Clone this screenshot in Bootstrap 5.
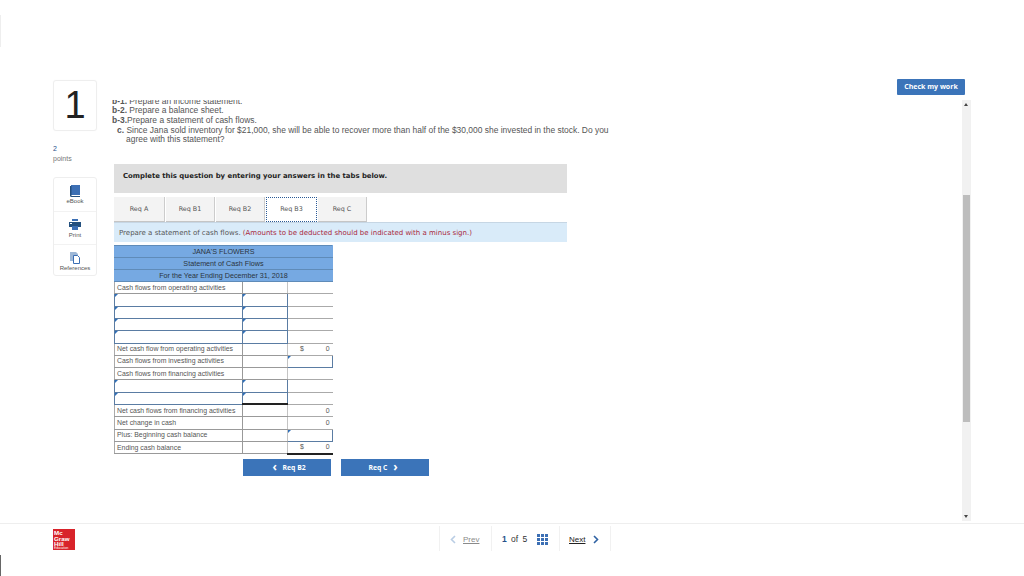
<!DOCTYPE html>
<html lang="en">
<head>
<meta charset="utf-8">
<title>Statement of Cash Flows</title>
<link href="https://cdn.jsdelivr.net/npm/bootstrap@5.3.0/dist/css/bootstrap.min.css" rel="stylesheet">
<style>
html,body{height:576px;overflow:hidden;background:#fff}
body{font-family:"Liberation Sans",Arial,sans-serif;color:#333;position:relative;font-size:8.2px}
.edge-a,.edge-b{position:absolute;left:0;width:1px}
.edge-a{top:15px;height:32px;background:#eee}
.edge-b{top:555px;height:21px;background:#666}
.stage{height:523px;padding:79px 53px 0 53px}
.rail{width:44px;flex:none;margin-right:15px;padding-top:1px}
.qnum{height:51px;border:1px solid #eee;border-radius:3px;font-size:38px;color:#222;line-height:49px;box-shadow:0 0 1px #eee}
.pts{margin-top:13px;font-size:7px;line-height:9.500px;color:#777}
.pts b{display:block;font-weight:400;color:#27518a}
.tools{margin-top:14px;height:99px;border:1px solid #eee;border-radius:3px;font-size:6px;color:#555}
.tool{height:33px;padding-top:7px;line-height:7px}
.tool+.tool{border-top:1px solid #f2f2f2}
.tool svg{display:block;margin:0 auto 1px}
.mainwrap{width:859px;flex:none}
.checkrow{height:21px;padding-right:6px}
.btn-check-work{width:68px;height:16px;padding:0;border:0;border-radius:1px;background:#3b74b9;color:#fff;font:700 7px/16px "Open Sans",sans-serif}
.viewport{height:421px}
.scrollpane{flex:1 1 auto;overflow:hidden;min-width:0}
.sbar{width:9px;flex:none;background:#f1f1f1;margin-left:auto;padding-top:95px;position:relative}
.sthumb{height:227px;width:7px;margin-left:1px;background:#bdbdbd}
.sarrow{position:absolute;left:2px;width:0;height:0;border-left:2.500px solid transparent;border-right:2.500px solid transparent}
.sarrow.up{top:3px;border-bottom:3px solid #444}
.sarrow.down{bottom:3px;border-top:3px solid #444}
.qtext{margin:-3.500px 0 0;line-height:9.700px;color:#555;font-size:8.450px}
.qtext div{white-space:nowrap}
.qtext .i1{padding-left:5px}
.qtext .i2{padding-left:14px}
.instr{margin:19px 0 0 2px;width:453px;height:29px;background:#dfdfdf;padding-left:9px;font:700 6.900px/25px "DejaVu Sans",sans-serif;color:#222}
.tabrow{margin:4px 0 0 2px;height:25px}
.tabitem{height:25px;background:#f3f3f3;border-right:1px solid #ccc;border-bottom:1px solid #c5c5c5;margin-right:1px;font:6.400px/25px "DejaVu Sans",sans-serif;color:#555;text-align:center}
.tabitem.w1{width:51px}
.tabitem.w2{width:49px}
.tabitem.now{background:#fff;width:51px;border:1px dotted #2a5a96;line-height:23px}
.notice{margin-left:2px;width:453px;height:20px;background:#d9ebf9;padding-left:5px;font:7px/20px "DejaVu Sans",sans-serif;color:#555;border-top:1px solid #c6d6e4}
.notice span{color:#a8283c}
.cf{margin:3px 0 0 2px;width:218px;table-layout:fixed;border-collapse:collapse;font-size:6.900px;color:#555}
.cf td{height:12.300px;padding:0 2px;line-height:10px;border:1px solid #d8d8d8;white-space:nowrap;overflow:hidden}
.cf .hd td{background:#76a9e2;text-align:center;color:#2b3440;font-size:7.200px;border:1px solid #5f8bb8;border-left-color:#76a9e2;border-right-color:#76a9e2;height:12px}
.cf td.lb{border-left:1px solid #aaa;border-bottom:1px solid #999;border-top:1px solid #bbb;border-right:1px solid #999}
.cf td.mid{border-right:1px solid #c4c4c4;border-bottom:1px solid #999;border-top:1px solid #bbb}
.cf td.vl{border-right:0;border-bottom:1px solid #aaa;border-top:1px solid #bbb;text-align:right;padding-right:3px}
.cf td.entry{position:relative;border:1px solid #5a7ca3}
.cf td.entry::before{content:"";position:absolute;left:0;top:0;border-top:3px solid #2f6fb8;border-right:3px solid transparent}
.cf td.heavy{border-bottom:2px solid #222}
.cf .dl{float:left;padding-left:10px}
.pagerow{margin:4px 0 0 131px;gap:10px}
.btn-go{width:88px;height:17px;padding:0;border:0;border-radius:0;background:#3b74b9;color:#fff;font:700 6.800px/17px "Open Sans",sans-serif}
.btn-go i{font-style:normal;font-size:12px;font-weight:700;margin:0 4px;line-height:1;vertical-align:-1px}
.footbar{height:53px;border-top:1px solid #eee}
.mh{width:22px;height:21px;margin:5px 0 0 53px;background:#d8232a;color:#fff;font:700 6.200px/5.500px "Liberation Sans",sans-serif;padding:1px 0 0 1px;overflow:hidden;flex:none}
.mh small{display:block;font-size:3.200px;line-height:3.500px;font-weight:400}
.fnav{margin:2px 0 0 364px;height:25px;color:#333;font-size:8px}
.fcell{height:25px;border-left:1px solid #f1f1f1;align-items:center;padding-top:2px}
.fprev{width:52px;padding-left:10px;color:#8a8a8a;gap:7px}
.fcount{width:68px;padding-left:10px;gap:10px}
.fcount>span{font-size:8.500px;word-spacing:2px}
.fnext{width:52px;padding-left:9px;gap:8px;border-right:1px solid #f1f1f1;color:#222}
.fnum{color:#27518a;font-weight:700}
.fu{text-decoration:underline}
</style>
</head>
<body>
<div class="edge-a"></div><div class="edge-b"></div>
<div class="stage d-flex">
  <div class="rail text-center">
    <div class="qnum">1</div>
    <div class="pts text-start"><b>2</b>points</div>
    <div class="tools">
      <div class="tool">
        <svg width="11" height="12" viewBox="0 0 11 12"><path fill="#3c6fb4" d="M1 0h9v10H1z"/><path fill="#24507f" d="M0 1h1.500v10H10v1H1.500A1.500 1.500 0 0 1 0 10.500z"/></svg>eBook
      </div>
      <div class="tool">
        <svg width="12" height="12" viewBox="0 0 12 12"><path fill="#3c6fb4" d="M3 0h6v2H3z"/><path fill="#24507f" d="M0 3h12v5H0z"/><path fill="#fff" d="M1 4h2v1H1z"/><path fill="#3c6fb4" d="M3 7h6v4H3z"/></svg>Print
      </div>
      <div class="tool">
        <svg width="11" height="12" viewBox="0 0 11 12"><path fill="#9db7d6" d="M0 0h6l2 2v7H0z"/><path fill="#fff" stroke="#3c6fb4" d="M3.500 3.500h4l2 2v6h-6z"/></svg>References
      </div>
    </div>
  </div>
  <div class="mainwrap">
    <div class="checkrow d-flex justify-content-end"><button class="btn btn-check-work">Check my work</button></div>
    <div class="viewport d-flex">
      <div class="scrollpane">
        <div class="qtext">
          <div><b>b-1.</b> Prepare an income statement.</div>
          <div><b>b-2.</b> Prepare a balance sheet.</div>
          <div><b>b-3.</b>Prepare a statement of cash flows.</div>
          <div class="i1"><b>c.</b> Since Jana sold inventory for $21,000, she will be able to recover more than half of the $30,000 she invested in the stock. Do you</div>
          <div class="i2">agree with this statement?</div>
        </div>
        <div class="instr">Complete this question by entering your answers in the tabs below.</div>
        <div class="tabrow d-flex">
          <div class="tabitem w1">Req A</div>
          <div class="tabitem w2">Req B1</div>
          <div class="tabitem w2">Req B2</div>
          <div class="tabitem now">Req B3</div>
          <div class="tabitem w2">Req C</div>
        </div>
        <div class="notice">Prepare a statement of cash flows. <span>(Amounts to be deducted should be indicated with a minus sign.)</span></div>
        <table class="cf">
          <colgroup><col style="width:128px"><col style="width:45px"><col style="width:45px"></colgroup>
          <tr class="hd"><td colspan="3">JANA'S FLOWERS</td></tr>
          <tr class="hd"><td colspan="3">Statement of Cash Flows</td></tr>
          <tr class="hd"><td colspan="3">For the Year Ending December 31, 2018</td></tr>
          <tr><td class="lb">Cash flows from operating activities</td><td class="mid"></td><td class="vl"></td></tr>
          <tr><td class="entry"></td><td class="entry"></td><td class="vl"></td></tr>
          <tr><td class="entry"></td><td class="entry"></td><td class="vl"></td></tr>
          <tr><td class="entry"></td><td class="entry"></td><td class="vl"></td></tr>
          <tr><td class="entry"></td><td class="entry"></td><td class="vl"></td></tr>
          <tr><td class="lb">Net cash flow from operating activities</td><td class="mid"></td><td class="vl"><span class="dl">$</span>0</td></tr>
          <tr><td class="lb">Cash flows from investing activities</td><td class="mid"></td><td class="entry"></td></tr>
          <tr><td class="lb">Cash flows from financing activities</td><td class="mid"></td><td class="vl"></td></tr>
          <tr><td class="entry"></td><td class="entry"></td><td class="vl"></td></tr>
          <tr><td class="entry"></td><td class="entry heavy"></td><td class="vl"></td></tr>
          <tr><td class="lb">Net cash flows from financing activities</td><td class="mid"></td><td class="vl">0</td></tr>
          <tr><td class="lb">Net change in cash</td><td class="mid"></td><td class="vl">0</td></tr>
          <tr><td class="lb">Plus: Beginning cash balance</td><td class="mid"></td><td class="entry"></td></tr>
          <tr><td class="lb">Ending cash balance</td><td class="mid"></td><td class="vl heavy"><span class="dl">$</span>0</td></tr>
        </table>
        <div class="pagerow d-flex">
          <button class="btn btn-go"><i>&#8249;</i> Req B2</button>
          <button class="btn btn-go">Req C <i>&#8250;</i></button>
        </div>
      </div>
      <div class="sbar"><span class="sarrow up"></span><div class="sthumb"></div><span class="sarrow down"></span></div>
    </div>
  </div>
</div>
<div class="footbar d-flex">
  <div class="mh">Mc<br>Graw<br>Hill<small>Education</small></div>
  <div class="fnav d-flex">
    <div class="fcell fprev d-flex">
      <svg width="6" height="9" viewBox="0 0 6 9"><path d="M5 1 1.500 4.500 5 8" fill="none" stroke="#b9cde4" stroke-width="1.600"/></svg>
      <span class="fu">Prev</span>
    </div>
    <div class="fcell fcount d-flex">
      <span><span class="fnum">1</span> of 5</span>
      <svg width="11" height="11" viewBox="0 0 11 11"><path fill="#3c6fb4" d="M0 0h3v3H0zM4 0h3v3H4zM8 0h3v3H8zM0 4h3v3H0zM4 4h3v3H4zM8 4h3v3H8zM0 8h3v3H0zM4 8h3v3H4zM8 8h3v3H8z"/></svg>
    </div>
    <div class="fcell fnext d-flex">
      <span class="fu">Next</span>
      <svg width="6" height="9" viewBox="0 0 6 9"><path d="M1 1l3.500 3.500L1 8" fill="none" stroke="#2f62a3" stroke-width="1.600"/></svg>
    </div>
  </div>
</div>
</body>
</html>
